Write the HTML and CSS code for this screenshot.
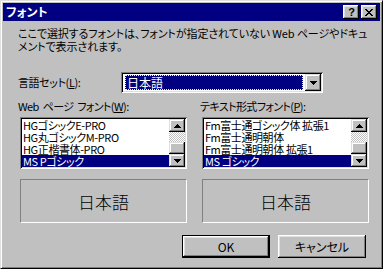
FILE: index.html
```html
<!DOCTYPE html>
<html lang="ja">
<head>
<meta charset="utf-8">
<title>フォント</title>
<link rel="stylesheet" href="styles.css">
</head>
<body>
<div class="window">
  <div class="titlebar">
    <span class="title">フォント</span>
    <div class="tbtns">
      <span class="tbtn help">?</span>
      <span class="tbtn close">
        <svg width="8" height="7" viewBox="0 0 8 7" shape-rendering="crispEdges"><path d="M0 0h2v1h-2zM6 0h2v1h-2zM1 1h2v1h-2zM5 1h2v1h-2zM2 2h4v1h-4zM3 3h2v1h-2zM2 4h4v1h-4zM1 5h2v1h-2zM5 5h2v1h-2zM0 6h2v1h-2zM6 6h2v1h-2z" fill="#000"/></svg>
      </span>
    </div>
  </div>
  <div class="content">
    <p class="desc">ここで選択するフォントは、フォントが指定されていない Web ページやドキュ<br>メントで表示されます。</p>
    <div class="langrow">
      <span class="lbl-lang">言語セット(<u>L</u>):</span>
      <div class="combo">
        <div class="combo-val"><span>日本語</span></div>
        <div class="sbtn combo-btn"><svg width="7" height="4" viewBox="0 0 7 4" shape-rendering="crispEdges"><path d="M0 0h7v1h-7zM1 1h5v1h-5zM2 2h3v1h-3zM3 3h1v1h-1z" fill="#000"/></svg></div>
      </div>
    </div>
    <div class="cols">
      <div class="col">
        <div class="lbl">Web ページ フォント(<u>W</u>):</div>
        <div class="list">
          <div class="items">
            <div class="item">HGゴシックE-PRO</div>
            <div class="item">HG丸ゴシックM-PRO</div>
            <div class="item">HG正楷書体-PRO</div>
            <div class="item sel">MS Pゴシック</div>
          </div>
          <div class="sb">
            <div class="sbtn up"><svg width="7" height="4" viewBox="0 0 7 4" shape-rendering="crispEdges"><path d="M3 0h1v1h-1zM2 1h3v1h-3zM1 2h5v1h-5zM0 3h7v1h-7z" fill="#000"/></svg></div>
            <div class="track"></div>
            <div class="sbtn thumb"></div>
            <div class="sbtn down"><svg width="7" height="4" viewBox="0 0 7 4" shape-rendering="crispEdges"><path d="M0 0h7v1h-7zM1 1h5v1h-5zM2 2h3v1h-3zM3 3h1v1h-1z" fill="#000"/></svg></div>
          </div>
        </div>
        <div class="preview">日本語</div>
      </div>
      <div class="col">
        <div class="lbl">テキスト形式フォント(<u>P</u>):</div>
        <div class="list">
          <div class="items">
            <div class="item">Fm富士通ゴシック体 拡張1</div>
            <div class="item">Fm富士通明朝体</div>
            <div class="item">Fm富士通明朝体 拡張1</div>
            <div class="item sel">MS ゴシック</div>
          </div>
          <div class="sb">
            <div class="sbtn up"><svg width="7" height="4" viewBox="0 0 7 4" shape-rendering="crispEdges"><path d="M3 0h1v1h-1zM2 1h3v1h-3zM1 2h5v1h-5zM0 3h7v1h-7z" fill="#000"/></svg></div>
            <div class="track"></div>
            <div class="sbtn thumb"></div>
            <div class="sbtn down"><svg width="7" height="4" viewBox="0 0 7 4" shape-rendering="crispEdges"><path d="M0 0h7v1h-7zM1 1h5v1h-5zM2 2h3v1h-3zM3 3h1v1h-1z" fill="#000"/></svg></div>
          </div>
        </div>
        <div class="preview">日本語</div>
      </div>
    </div>
    <div class="btnrow">
      <button class="btn default">OK</button>
      <button class="btn">キャンセル</button>
    </div>
  </div>
</div>
</body>
</html>
```
FILE: styles.css
```css
html, body {
  margin: 0;
  padding: 0;
  background: #fff;
}

.window {
  width: 383px;
  height: 269px;
  box-sizing: border-box;
  background: #c0c0c0;
  border: 1px solid;
  border-color: #dfdfdf #000 #000 #dfdfdf;
  box-shadow: inset 1px 1px #fff, inset -1px -1px #808080;
  padding: 2px;
  display: flex;
  flex-direction: column;
  font-family: "Noto Sans CJK JP", sans-serif;
  font-size: 11px;
  font-feature-settings: "palt";
  color: #000;
}

.titlebar {
  height: 18px;
  background: #000080;
  display: flex;
  align-items: center;
  justify-content: space-between;
  padding: 0 3px 0 3px;
  flex: none;
}

.title {
  color: #fff;
  font-weight: bold;
  font-size: 12px;
  line-height: 14px;
}

.tbtns {
  display: flex;
  gap: 2px;
}

.tbtn {
  width: 16px;
  height: 14px;
  box-sizing: border-box;
  background: #c0c0c0;
  box-shadow: inset -1px -1px #000, inset 1px 1px #fff, inset -2px -2px #808080, inset 2px 2px #dfdfdf;
  display: flex;
  align-items: center;
  justify-content: center;
}

.help {
  font-family: "Liberation Sans", sans-serif;
  font-weight: bold;
  font-size: 11px;
  line-height: 11px;
  padding-left: 1px;
}

.content {
  padding: 6px 14px 0 15px;
  flex: 1;
}

.desc {
  margin: 0;
  line-height: 13px;
  white-space: nowrap;
  letter-spacing: -0.1px;
}

.langrow {
  margin-top: 19px;
  display: flex;
  align-items: center;
}

.lbl-lang {
  width: 103px;
  line-height: 13px;
  letter-spacing: -0.4px;
}

.combo {
  width: 202px;
  height: 21px;
  box-sizing: border-box;
  background: #fff;
  box-shadow: inset 1px 1px #808080, inset -1px -1px #fff, inset 2px 2px #000, inset -2px -2px #dfdfdf;
  padding: 2px;
  display: flex;
}

.combo-val {
  flex: 1;
  margin: 1px 2px 1px 2px;
  background: #000080;
  outline: 1px dotted #ffff80;
  outline-offset: -1px;
  color: #fff;
  font-size: 12px;
  line-height: 15px;
  padding-left: 2px;
}

.sbtn {
  box-sizing: border-box;
  background: #c0c0c0;
  box-shadow: inset -1px -1px #000, inset 1px 1px #dfdfdf, inset -2px -2px #808080, inset 2px 2px #fff;
  display: flex;
  align-items: center;
  justify-content: center;
}

.combo-btn {
  width: 16px;
  height: 17px;
}

.cols {
  margin-top: 7px;
  display: grid;
  grid-template-columns: 170px 169px;
  column-gap: 12px;
}

.lbl {
  line-height: 13px;
  margin-bottom: 4px;
  white-space: nowrap;
  letter-spacing: -0.6px;
  word-spacing: 2px;
}

.list {
  margin-left: 2px;
  width: 167px;
  height: 52px;
  box-sizing: border-box;
  background: #fff;
  box-shadow: inset 1px 1px #808080, inset -1px -1px #fff, inset 2px 2px #000, inset -2px -2px #dfdfdf;
  padding: 2px;
  display: flex;
}

.items {
  flex: 1;
  overflow: hidden;
}

.item {
  height: 12px;
  line-height: 12px;
  font-size: 11px;
  letter-spacing: -0.4px;
  padding-left: 1px;
  white-space: nowrap;
}

.item.sel {
  background: #000080;
  color: #fff;
}

.sb {
  width: 16px;
  display: flex;
  flex-direction: column;
}

.sb .up, .sb .down {
  height: 13px;
}

.sb .thumb {
  height: 12px;
}

.track {
  height: 10px;
  background: repeating-conic-gradient(#c0c0c0 0 25%, #fff 0 50%) 0 0 / 2px 2px;
}

.preview {
  margin-left: 2px;
  margin-top: 10px;
  width: 167px;
  height: 44px;
  box-sizing: border-box;
  border: 1px solid;
  border-color: #808080 #fff #fff #808080;
  display: flex;
  align-items: center;
  justify-content: center;
  font-size: 17px;
  font-weight: 300;
}

.btnrow {
  margin-top: 12px;
  display: flex;
  justify-content: flex-end;
  gap: 8px;
}

.btn {
  width: 88px;
  height: 23px;
  box-sizing: border-box;
  background: #c0c0c0;
  border: 0;
  padding: 0;
  font-family: "Noto Sans CJK JP", sans-serif;
  font-size: 12px;
  font-feature-settings: "palt";
  color: #000;
  box-shadow: inset -1px -1px #000, inset 1px 1px #fff, inset -2px -2px #808080, inset 2px 2px #dfdfdf;
}

.btn.default {
  border: 1px solid #000;
}
```
